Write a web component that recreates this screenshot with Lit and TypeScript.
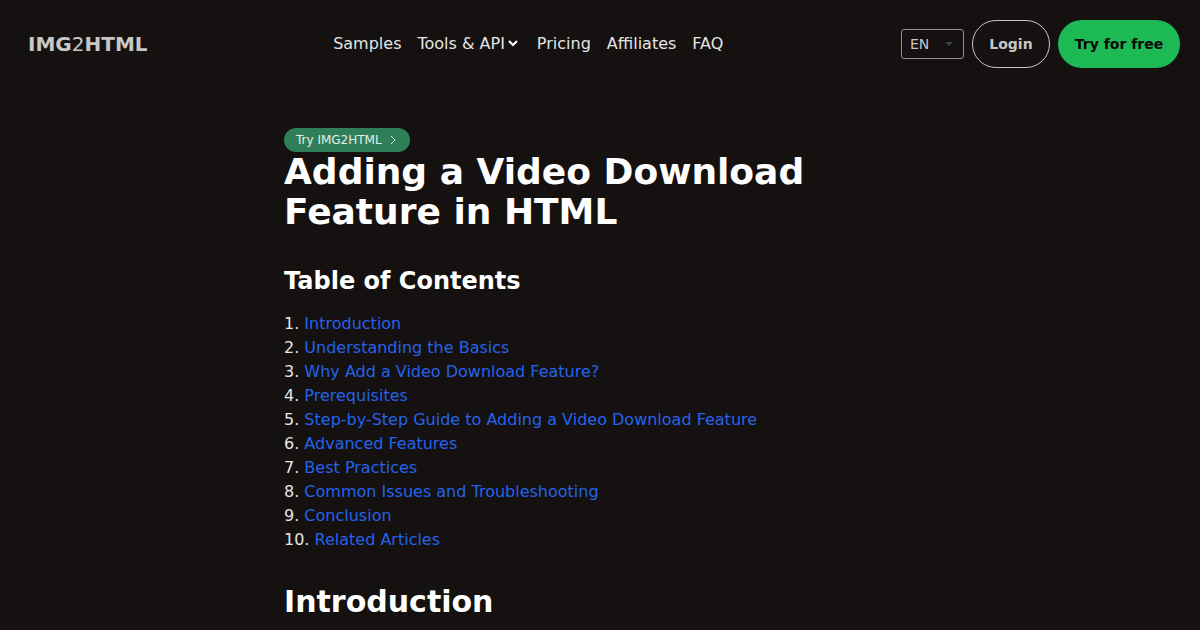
import { LitElement, html, css } from "lit";
import { customElement } from "lit/decorators.js";

const toc = [
  "Introduction",
  "Understanding the Basics",
  "Why Add a Video Download Feature?",
  "Prerequisites",
  "Step-by-Step Guide to Adding a Video Download Feature",
  "Advanced Features",
  "Best Practices",
  "Common Issues and Troubleshooting",
  "Conclusion",
  "Related Articles",
];

@customElement("app-root")
export class AppRoot extends LitElement {
  static styles = css`
    :host {
      display: block;
      height: 630px;
      overflow: hidden;
      background: #141110;
      color: #e5e5e5;
      font-family: "DejaVu Sans", sans-serif;
      font-size: 16px;
      line-height: 24px;
    }
    * { box-sizing: border-box; }
    .header {
      display: flex;
      align-items: center;
      justify-content: space-between;
      height: 88px;
      padding: 0 20px 0 28px;
    }
    .logo {
      font-size: 20px;
      font-weight: 700;
      color: #c9c7c6;
      line-height: 28px;
    }
    .logo span { font-weight: 400; }
    .nav {
      display: flex;
      align-items: center;
      gap: 16px;
      margin-left: 8px;
      color: #e5e5e5;
    }
    .tools { display: flex; align-items: center; }
    .tools svg { display: block; }
    .actions {
      display: flex;
      justify-content: flex-end;
      align-items: center;
      gap: 8px;
    }
    .lang {
      display: flex;
      align-items: center;
      justify-content: space-between;
      width: 63px;
      height: 30px;
      padding: 0 10px 0 8px;
      border: 1px solid #8a8f98;
      border-radius: 3px;
      font-size: 14px;
      color: #c9c7c6;
    }
    .caret {
      width: 0;
      height: 0;
      border-left: 4px solid transparent;
      border-right: 4px solid transparent;
      border-top: 4px solid #374151;
    }
    .btn {
      display: flex;
      align-items: center;
      justify-content: center;
      height: 48px;
      border-radius: 24px;
      font-size: 14px;
      font-weight: 700;
    }
    .login {
      width: 78px;
      border: 1px solid #c9c7c6;
      color: #c9c7c6;
    }
    .try {
      width: 122px;
      background: #1db954;
      color: #0a0a0a;
    }
    .main {
      width: 632px;
      margin-left: 284px;
      padding-top: 40px;
    }
    .badge {
      display: inline-flex;
      align-items: center;
      gap: 8px;
      height: 24px;
      padding: 0 12px;
      border-radius: 12px;
      background: #2f8058;
      color: #e5efe9;
      font-size: 12px;
      line-height: 16px;
    }
    .badge svg { display: block; }
    .badge-row { display: flex; height: 24px; }
    h1 {
      margin: 0;
      font-size: 36px;
      line-height: 40px;
      font-weight: 700;
      color: #fff;
    }
    .toc-title {
      margin: 33px 0 15px;
      font-size: 24px;
      line-height: 32px;
      font-weight: 700;
      color: #fff;
    }
    ol {
      margin: 0;
      padding: 0;
      list-style: decimal inside;
    }
    li::marker { color: #e5e5e5; }
    a { color: #2563eb; text-decoration: none; }
    .intro {
      margin: 32px 0 0;
      font-size: 30px;
      line-height: 36px;
      font-weight: 700;
      color: #fff;
    }
  `;

  render() {
    return html`
      <header class="header">
        <div class="logo">IMG<span>2</span>HTML</div>
        <nav class="nav">
          <span>Samples</span>
          <span class="tools">Tools &amp; API
            <svg width="16" height="16" viewBox="0 0 16 16" fill="none" stroke="#fff" stroke-width="2.2">
              <path d="M4 5l4 4 4-4"/>
            </svg>
          </span>
          <span>Pricing</span>
          <span>Affiliates</span>
          <span>FAQ</span>
        </nav>
        <div class="actions">
          <div class="lang">EN<i class="caret"></i></div>
          <div class="btn login">Login</div>
          <div class="btn try">Try for free</div>
        </div>
      </header>
      <main class="main">
        <div class="badge-row">
          <span class="badge">Try IMG2HTML
            <svg width="8" height="10" viewBox="0 0 8 10" fill="none" stroke="#e5efe9" stroke-width="1">
              <path d="M1 1l4 4-4 4"/>
            </svg>
          </span>
        </div>
        <h1>Adding a Video Download<br />Feature in HTML</h1>
        <h2 class="toc-title">Table of Contents</h2>
        <ol>
          ${toc.map((t) => html`<li><a href="#">${t}</a></li>`)}
        </ol>
        <h2 class="intro">Introduction</h2>
      </main>
    `;
  }
}
